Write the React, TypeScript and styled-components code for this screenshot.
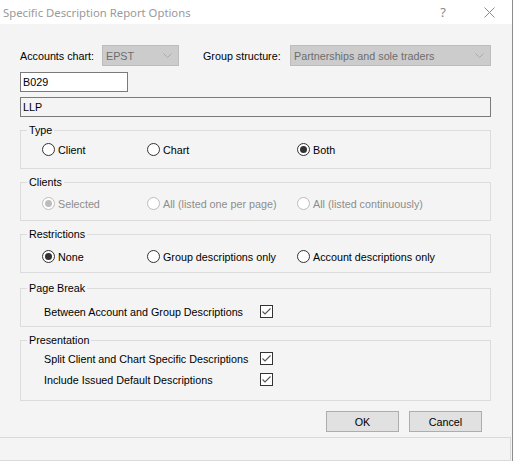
import React from 'react';
import styled, { createGlobalStyle } from 'styled-components';

const GlobalStyle = createGlobalStyle`
  html, body {
    margin: 0;
    padding: 0;
    background: #ffffff;
  }
  * {
    box-sizing: border-box;
  }
`;

const Window = styled.div`
  width: 513px;
  height: 461px;
  display: flex;
  flex-direction: column;
  border-right: 1px solid #8c8c8c;
  background: #f4f4f4;
  font-family: "Liberation Sans", Arial, sans-serif;
  font-size: 10.75px;
  color: #000;
`;

const TitleBar = styled.div`
  height: 24px;
  background: #ffffff;
  display: flex;
  align-items: center;
  justify-content: space-between;
  padding: 0 0 0 3px;
`;

const Title = styled.div`
  font-family: "Noto Sans", "Open Sans", sans-serif;
  font-size: 11.3px;
  color: #9a9a9a;
`;

const TitleButtons = styled.div`
  display: flex;
  align-items: center;
  height: 100%;
`;

const TitleButton = styled.div`
  width: 46px;
  height: 100%;
  display: flex;
  align-items: center;
  justify-content: center;
  color: #8a8a8a;
  font-family: "Noto Sans", sans-serif;
  font-size: 13px;
`;

const Body = styled.div`
  flex: 1;
  display: flex;
  flex-direction: column;
  padding: 21px 21px 0 20px;
`;

const ChartRow = styled.div`
  display: flex;
  align-items: center;
  height: 21px;
`;

const FieldLabel = styled.span<{ $w: number; $ml?: number }>`
  width: ${({ $w }) => $w}px;
  margin-left: ${({ $ml }) => $ml ?? 0}px;
  white-space: nowrap;
`;

const Combo = styled.div<{ $w: number }>`
  width: ${({ $w }) => $w}px;
  height: 21px;
  background: #cccccc;
  border: 1px solid #bcbcbc;
  color: #6d6d6d;
  display: flex;
  align-items: center;
  justify-content: space-between;
  padding: 0 6px 0 3px;
  white-space: nowrap;
`;

const TextBox = styled.div<{ $w?: number; $mt: number; $readOnly?: boolean }>`
  width: ${({ $w }) => ($w ? `${$w}px` : '100%')};
  height: 20px;
  margin-top: ${({ $mt }) => $mt}px;
  border: 1px solid #7a7a7a;
  background: ${({ $readOnly }) => ($readOnly ? '#f4f4f4' : '#ffffff')};
  display: flex;
  align-items: center;
  padding-left: 2px;
`;

const Group = styled.div<{ $h: number; $pt: number; $mt: number }>`
  position: relative;
  height: ${({ $h }) => $h}px;
  margin-top: ${({ $mt }) => $mt}px;
  padding-top: ${({ $pt }) => $pt}px;
  border: 1px solid #dcdcdc;
  display: flex;
  flex-direction: column;
  gap: 4px;
`;

const Caption = styled.span`
  position: absolute;
  top: -7px;
  left: 6px;
  padding: 0 2px;
  background: #f4f4f4;
  line-height: 13px;
`;

const RadioRow = styled.div`
  display: grid;
  grid-template-columns: 105px 150px 1fr;
  padding-left: 21px;
  height: 17px;
`;

const RadioItem = styled.label<{ $disabled?: boolean }>`
  display: flex;
  align-items: center;
  gap: 3px;
  white-space: nowrap;
  color: ${({ $disabled }) => ($disabled ? '#8d8d8d' : '#000')};
`;

const RadioCircle = styled.span<{ $checked?: boolean; $disabled?: boolean }>`
  width: 13px;
  height: 13px;
  border-radius: 50%;
  border: 1px solid ${({ $disabled }) => ($disabled ? '#bcbcbc' : '#333333')};
  background: #ffffff;
  display: flex;
  align-items: center;
  justify-content: center;
  flex-shrink: 0;

  &::after {
    content: '';
    display: ${({ $checked }) => ($checked ? 'block' : 'none')};
    width: 7px;
    height: 7px;
    border-radius: 50%;
    background: ${({ $disabled }) => ($disabled ? '#bcbcbc' : '#333333')};
  }
`;

const CheckRow = styled.div`
  display: grid;
  grid-template-columns: 216px 13px;
  align-items: center;
  padding-left: 23px;
  height: 17px;
  white-space: nowrap;
`;

const CheckBoxBox = styled.span`
  width: 13px;
  height: 13px;
  border: 1px solid #333333;
  background: #ffffff;
  display: flex;
`;

const ButtonRow = styled.div`
  display: flex;
  justify-content: flex-end;
  gap: 10px;
  margin-top: 10px;
  padding-right: 9px;
`;

const Button = styled.div`
  width: 73px;
  height: 21px;
  background: #e1e1e1;
  border: 1px solid #adadad;
  display: flex;
  align-items: center;
  justify-content: center;
`;

const StatusBar = styled.div`
  height: 24px;
  border-top: 1px solid #d9d9d9;
  border-bottom: 1px solid #d9d9d9;
  border-right: 1px solid #d9d9d9;
  margin-right: 1px;
`;

const Chevron = () => (
  <svg width="9" height="5" viewBox="0 0 9 5">
    <polyline points="0.5,0.5 4.5,4.5 8.5,0.5" fill="none" stroke="#a8a8a8" strokeWidth="1" />
  </svg>
);

const CloseIcon = () => (
  <svg width="11" height="11" viewBox="0 0 11 11">
    <path d="M0.5 0.5 L10.5 10.5 M10.5 0.5 L0.5 10.5" stroke="#8a8a8a" strokeWidth="1" />
  </svg>
);

const Radio: React.FC<{ label: string; checked?: boolean; disabled?: boolean }> = ({ label, checked, disabled }) => (
  <RadioItem $disabled={disabled}>
    <RadioCircle $checked={checked} $disabled={disabled} />
    {label}
  </RadioItem>
);

const Check: React.FC<{ label: string }> = ({ label }) => (
  <CheckRow>
    <span>{label}</span>
    <CheckBoxBox>
      <svg width="11" height="11" viewBox="0 0 11 11">
        <polyline points="1.5,5.5 4,8 9.5,2.5" fill="none" stroke="#555555" strokeWidth="1.1" />
      </svg>
    </CheckBoxBox>
  </CheckRow>
);

export default function App() {
  return (
    <>
      <GlobalStyle />
      <Window>
        <TitleBar>
          <Title>Specific Description Report Options</Title>
          <TitleButtons>
            <TitleButton>?</TitleButton>
            <TitleButton>
              <CloseIcon />
            </TitleButton>
          </TitleButtons>
        </TitleBar>
        <Body>
          <ChartRow>
            <FieldLabel $w={82}>Accounts chart:</FieldLabel>
            <Combo $w={77}>
              EPST
              <Chevron />
            </Combo>
            <FieldLabel $w={87} $ml={24}>Group structure:</FieldLabel>
            <Combo $w={201}>
              Partnerships and sole traders
              <Chevron />
            </Combo>
          </ChartRow>
          <TextBox $w={108} $mt={6}>B029</TextBox>
          <TextBox $mt={5} $readOnly>LLP</TextBox>

          <Group $h={39} $pt={10} $mt={13}>
            <Caption>Type</Caption>
            <RadioRow>
              <Radio label="Client" />
              <Radio label="Chart" />
              <Radio label="Both" checked />
            </RadioRow>
          </Group>

          <Group $h={39} $pt={12} $mt={13}>
            <Caption>Clients</Caption>
            <RadioRow>
              <Radio label="Selected" checked disabled />
              <Radio label="All (listed one per page)" disabled />
              <Radio label="All (listed continuously)" disabled />
            </RadioRow>
          </Group>

          <Group $h={39} $pt={13} $mt={13}>
            <Caption>Restrictions</Caption>
            <RadioRow>
              <Radio label="None" checked />
              <Radio label="Group descriptions only" />
              <Radio label="Account descriptions only" />
            </RadioRow>
          </Group>

          <Group $h={39} $pt={14} $mt={15}>
            <Caption>Page Break</Caption>
            <Check label="Between Account and Group Descriptions" />
          </Group>

          <Group $h={61} $pt={9} $mt={13}>
            <Caption>Presentation</Caption>
            <Check label="Split Client and Chart Specific Descriptions" />
            <Check label="Include Issued Default Descriptions" />
          </Group>

          <ButtonRow>
            <Button>OK</Button>
            <Button>Cancel</Button>
          </ButtonRow>
        </Body>
        <StatusBar />
      </Window>
    </>
  );
}
